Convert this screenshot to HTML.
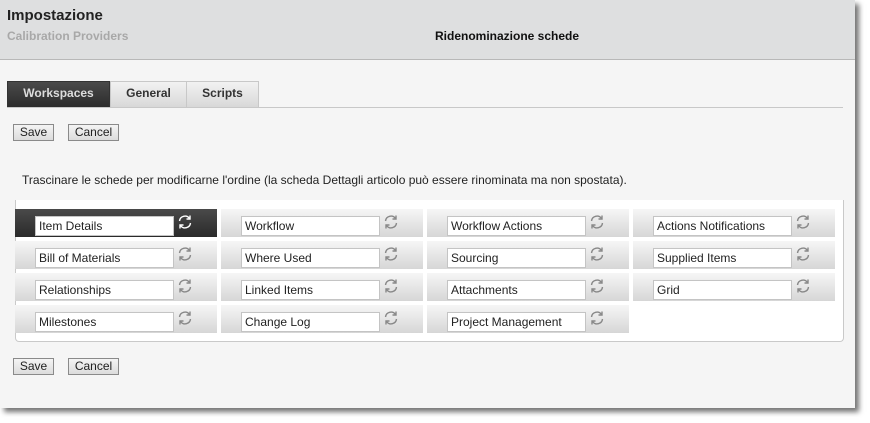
<!DOCTYPE html>
<html><head><meta charset="utf-8"><style>
*{box-sizing:border-box;margin:0;padding:0}
body{width:870px;height:423px;background:#fff;font-family:"Liberation Sans",Arial,sans-serif;position:relative;overflow:hidden}
#page{position:absolute;left:0;top:0;width:855px;height:408px;background:#f5f5f5;box-shadow:4px 4px 5px rgba(0,0,0,.55)}
#hdr{position:absolute;left:0;top:0;width:855px;height:60px;background:#dedfe0;border-bottom:1px solid #b8b8b8}
#t1{position:absolute;left:7px;top:7px;font-size:15px;font-weight:bold;color:#222}
#t2{position:absolute;left:7px;top:29px;font-size:12px;font-weight:bold;color:#a8a8a8}
#t3{position:absolute;left:435px;top:29px;font-size:12px;font-weight:bold;color:#111}
.tab{position:absolute;top:81px;height:26px;font-size:12px;font-weight:bold;line-height:23px;text-align:center;color:#333;background:linear-gradient(#f2f2f2,#d8d8d8);border:1px solid #c8c8c8;border-bottom:none}
#tl{position:absolute;left:7px;top:107px;width:836px;height:1px;background:#c8c8c8}
.btn{position:absolute;height:17px;font-size:12px;line-height:15px;text-align:center;color:#222;background:linear-gradient(#f4f4f4,#dcdcdc);border:1px solid #8a8a8a}
#msg{position:absolute;left:22px;top:173px;font-size:12px;color:#222}
#box{position:absolute;left:15px;top:200px;width:829px;height:142px;background:#fff;border:1px solid #c9c9c9;border-top:none;border-radius:0 0 4px 4px}
.tile{position:absolute;width:202px;height:28px;background:linear-gradient(#f6f6f6,#d6d6d6)}
.tile.d{background:linear-gradient(#4a4a4a,#2a2a2a)}
.tile .in{position:absolute;left:20px;top:7px;width:139px;height:20px;background:#fff;border:1px solid #c4c4c4;font-size:12px;line-height:18px;padding-left:3px;color:#222}
.tile svg{position:absolute;left:162px;top:5px}
</style></head><body>
<div id="page">
<div id="hdr"><div id="t1">Impostazione</div><div id="t2">Calibration Providers</div><div id="t3">Ridenominazione schede</div></div>
<div class="tab" style="left:7px;width:103px;background:linear-gradient(#4a4a4a,#2c2c2c);color:#ddd;border-color:#333">Workspaces</div>
<div class="tab" style="left:110px;width:77px">General</div>
<div class="tab" style="left:186px;width:73px">Scripts</div>
<div id="tl"></div>
<div class="btn" style="left:13px;top:124px;width:41px">Save</div>
<div class="btn" style="left:68px;top:124px;width:51px">Cancel</div>
<div id="msg">Trascinare le schede per modificarne l'ordine (la scheda Dettagli articolo può essere rinominata ma non spostata).</div>
<div id="box"></div>
<div class="btn" style="left:13px;top:358px;width:41px">Save</div>
<div class="btn" style="left:68px;top:358px;width:51px">Cancel</div>
</div>
<div id="tiles"></div>
<script>
var names=[["Item Details","Workflow","Workflow Actions","Actions Notifications"],["Bill of Materials","Where Used","Sourcing","Supplied Items"],["Relationships","Linked Items","Attachments","Grid"],["Milestones","Change Log","Project Management",null]];
var xs=[15,221,427,633],ys=[209,241,273,305],h="";
for(var r=0;r<4;r++)for(var c=0;c<4;c++){var n=names[r][c];if(!n)continue;var d=(r==0&&c==0);var col=d?"#fff":"#888";
h+='<div class="tile'+(d?' d':'')+'" style="left:'+xs[c]+'px;top:'+ys[r]+'px"><div class="in">'+n+'</div><svg width="16" height="16" viewBox="0 0 16 16" fill="none" stroke="'+col+'" stroke-width="1.4"><path d="M2.5 7A5.5 5.5 0 0 1 12.5 4.5"/><path d="M13 1.5V5H9.5"/><path d="M13.5 9A5.5 5.5 0 0 1 3.5 11.5"/><path d="M3 14.5V11H6.5"/></svg></div>';}
document.getElementById("tiles").innerHTML=h;
</script>
</body></html>
